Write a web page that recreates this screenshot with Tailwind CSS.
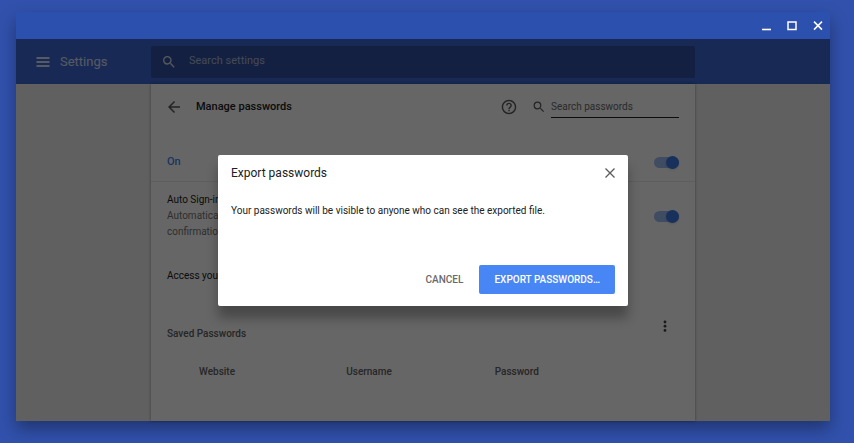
<!DOCTYPE html>
<html lang="en">

<head>
  <meta charset="UTF-8">
  <meta name="viewport" content="width=device-width, initial-scale=1.0">
  <title>Settings - Manage passwords</title>
  <script src="https://cdn.jsdelivr.net/npm/@tailwindcss/browser@4"></script>
</head>

<body class="min-h-screen flex bg-[#3151ac] pt-3 pl-4 pr-6 pb-[22px] font-[Roboto,sans-serif] text-[10px] text-[#212121]">
  <!-- Window -->
  <div class="flex-1 min-w-0 flex flex-col shadow-[0_8px_16px_rgba(0,0,0,0.35)]">
    <!-- Title bar -->
    <div class="h-[27px] bg-[#2c50ae] flex items-center justify-end gap-3 pr-[5px] text-white">
      <button type="button" aria-label="Minimize">
        <svg class="size-3.5" viewBox="0 0 14 14" fill="none" stroke="currentColor" stroke-width="1.6"><path d="M3 10.5h9" /></svg>
      </button>
      <button type="button" aria-label="Maximize">
        <svg class="size-3.5" viewBox="0 0 14 14" fill="none" stroke="currentColor" stroke-width="1.5"><path d="M3 3h8v7.6h-8z" /></svg>
      </button>
      <button type="button" aria-label="Close window">
        <svg class="size-3.5" viewBox="0 0 14 14" fill="none" stroke="currentColor" stroke-width="1.5"><path d="M3 2.6l8 8M11 2.6l-8 8" /></svg>
      </button>
    </div>

    <div class="relative flex-1 flex flex-col bg-[#f1f1f1]">
      <!-- Toolbar -->
      <header class="h-[45px] bg-[#3d68d4] text-white grid grid-cols-[1fr_minmax(0,544px)_1fr] items-center">
        <div class="flex items-center gap-2.5 pl-5 text-white/80">
          <button type="button" aria-label="Main menu">
            <svg class="w-3.5 h-3" viewBox="0 0 14 12" fill="none" stroke="currentColor" stroke-width="2"><path d="M0.5 2h13M0.5 6h13M0.5 10h13" /></svg>
          </button>
          <h1 class="text-[13px]">Settings</h1>
        </div>
        <label class="h-8 rounded-xs bg-[#3052a2] flex items-center gap-3.5 px-3 text-white/80">
          <svg class="size-3 shrink-0" viewBox="3 3 18 18" fill="currentColor"><path d="M15.5 14h-.79l-.28-.27A6.47 6.47 0 0 0 16 9.5 6.5 6.5 0 1 0 9.5 16c1.61 0 3.09-.59 4.23-1.57l.27.28v.79l5 4.99L20.49 19l-4.99-5zm-6 0C7.01 14 5 11.99 5 9.5S7.01 5 9.5 5 14 7.01 14 9.5 11.99 14 9.5 14z" /></svg>
          <input type="text" placeholder="Search settings" aria-label="Search settings" class="flex-1 text-[11px] outline-none placeholder:text-white/60">
        </label>
      </header>

      <!-- Passwords page -->
      <div class="flex-1 grid grid-cols-[1fr_minmax(0,544px)_1fr]">
        <main class="col-start-2 bg-white shadow-[0_0_3px_rgba(0,0,0,0.4)] px-4">
          <div class="h-[46px] flex items-center">
            <button type="button" aria-label="Back" class="mr-4 pl-px text-[#5a5a5a]">
              <svg class="size-3" viewBox="4 4 16 16" fill="currentColor"><path d="M20 11H7.83l5.59-5.59L12 4l-8 8 8 8 1.41-1.41L7.83 13H20v-2z" /></svg>
            </button>
            <h2 class="flex-1 text-[11px] font-medium">Manage passwords</h2>
            <button type="button" aria-label="Help" class="mr-4 text-[#5a5a5a]">
              <svg class="size-4" viewBox="1 1 22 22" fill="currentColor"><path d="M11 18h2v-2h-2v2zm1-16C6.48 2 2 6.48 2 12s4.48 10 10 10 10-4.48 10-10S17.52 2 12 2zm0 18c-4.41 0-8-3.59-8-8s3.59-8 8-8 8 3.59 8 8-3.59 8-8 8zm0-14c-2.21 0-4 1.79-4 4h2c0-1.1.9-2 2-2s2 .9 2 2c0 2-3 1.75-3 5h2c0-2.25 3-2.5 3-5 0-2.21-1.79-4-4-4z" /></svg>
            </button>
            <label class="flex items-center gap-1.5 text-[#5a5a5a]">
              <svg class="size-3" viewBox="2 2 20 20" fill="currentColor"><path d="M15.5 14h-.79l-.28-.27A6.47 6.47 0 0 0 16 9.5 6.5 6.5 0 1 0 9.5 16c1.61 0 3.09-.59 4.23-1.57l.27.28v.79l5 4.99L20.49 19l-4.99-5zm-6 0C7.01 14 5 11.99 5 9.5S7.01 5 9.5 5 14 7.01 14 9.5 11.99 14 9.5 14z" /></svg>
              <input type="text" placeholder="Search passwords" aria-label="Search passwords" class="w-32 h-[22px] border-b border-[#212121] outline-none placeholder:text-[#6a6a6a]">
            </label>
          </div>

          <div class="mt-3 -mx-4 px-4 pt-0.5 h-10 flex items-center justify-between border-b border-[#ececec]">
            <label for="save-toggle" class="text-[11px] font-medium text-[#4285f4]">On</label>
            <input id="save-toggle" type="checkbox" checked class="appearance-none relative w-[25px] h-[11px] rounded-full bg-[#a0bdf5] after:absolute after:right-0 after:-top-px after:size-[13px] after:rounded-full after:bg-[#3b78e7] after:shadow-sm">
          </div>

          <div class="h-[68px] flex items-center justify-between">
            <label for="signin-toggle" class="leading-4">
              Auto Sign-in
              <span class="block text-[#757575]">Automatically<br>confirmation</span>
            </label>
            <input id="signin-toggle" type="checkbox" checked class="appearance-none relative w-[25px] h-[11px] rounded-full bg-[#a0bdf5] after:absolute after:right-0 after:-top-px after:size-[13px] after:rounded-full after:bg-[#3b78e7] after:shadow-sm">
          </div>

          <p class="h-[51px] flex items-center">Access your</p>

          <div class="mt-[15px] flex items-start justify-between">
            <h3 class="pt-2.5 leading-4 font-medium text-[#616161]">Saved Passwords</h3>
            <button type="button" aria-label="More actions" class="mr-2 mt-1 text-[#424242]">
              <svg class="w-3 h-3.5" viewBox="0 0 12 14" fill="currentColor"><circle cx="6" cy="2" r="1.4" /><circle cx="6" cy="6.2" r="1.4" /><circle cx="6" cy="10.4" r="1.4" /></svg>
            </button>
          </div>

          <table class="w-full mt-[21px] table-fixed text-left text-[#616161]">
            <thead>
              <tr>
                <th class="w-[35%] pl-8 h-4 font-medium">Website</th>
                <th class="w-[29%] font-medium">Username</th>
                <th class="font-medium">Password</th>
              </tr>
            </thead>
          </table>
        </main>
      </div>

      <!-- Export dialog -->
      <div class="absolute inset-0 bg-black/60 flex items-center justify-center">
        <div role="dialog" aria-labelledby="dialog-title" class="w-[410px] bg-white rounded-xs px-[13px] py-3 shadow-[0_12px_12px_rgba(0,0,0,0.3)]">
          <div class="h-[13px] flex items-center justify-between">
            <h2 id="dialog-title" class="text-[12px]">Export passwords</h2>
            <button type="button" aria-label="Close" class="text-[#5a5a5a]">
              <svg class="size-2.5" viewBox="0 0 10 10" fill="none" stroke="currentColor" stroke-width="1.3"><path d="M0.5 0.5l9 9M9.5 0.5l-9 9" /></svg>
            </button>
          </div>
          <p class="mt-[23px] leading-4">Your passwords will be visible to anyone who can see the exported file.</p>
          <div class="mt-[46px] flex justify-end gap-[3px] font-medium">
            <button type="button" class="h-[29px] px-[13px] text-[#6a6a6a]">CANCEL</button>
            <button type="button" class="h-[29px] px-[15px] rounded-xs bg-[#4786f4] text-white">EXPORT PASSWORDS…</button>
          </div>
        </div>
      </div>
    </div>
  </div>
</body>

</html>
